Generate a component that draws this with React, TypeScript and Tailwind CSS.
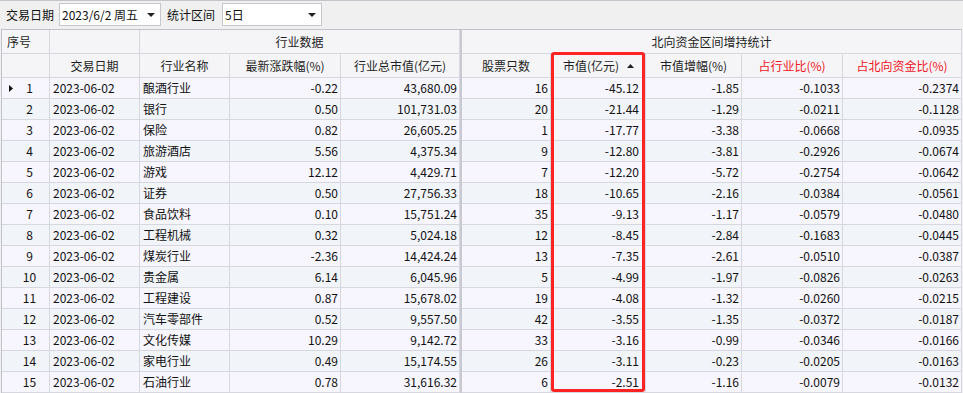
import React from "react";

type Row = [string, string, string, string, string, string, string, string];

const rows: Row[] = [
  ["酿酒行业", "-0.22", "43,680.09", "16", "-45.12", "-1.85", "-0.1033", "-0.2374"],
  ["银行", "0.50", "101,731.03", "20", "-21.44", "-1.29", "-0.0211", "-0.1128"],
  ["保险", "0.82", "26,605.25", "1", "-17.77", "-3.38", "-0.0668", "-0.0935"],
  ["旅游酒店", "5.56", "4,375.34", "9", "-12.80", "-3.81", "-0.2926", "-0.0674"],
  ["游戏", "12.12", "4,429.71", "7", "-12.20", "-5.72", "-0.2754", "-0.0642"],
  ["证券", "0.50", "27,756.33", "18", "-10.65", "-2.16", "-0.0384", "-0.0561"],
  ["食品饮料", "0.10", "15,751.24", "35", "-9.13", "-1.17", "-0.0579", "-0.0480"],
  ["工程机械", "0.32", "5,024.18", "12", "-8.45", "-2.84", "-0.1683", "-0.0445"],
  ["煤炭行业", "-2.36", "14,424.24", "13", "-7.35", "-2.61", "-0.0510", "-0.0387"],
  ["贵金属", "6.14", "6,045.96", "5", "-4.99", "-1.97", "-0.0826", "-0.0263"],
  ["工程建设", "0.87", "15,678.02", "19", "-4.08", "-1.32", "-0.0260", "-0.0215"],
  ["汽车零部件", "0.52", "9,557.50", "42", "-3.55", "-1.35", "-0.0372", "-0.0187"],
  ["文化传媒", "10.29", "9,142.72", "33", "-3.16", "-0.99", "-0.0346", "-0.0166"],
  ["家电行业", "0.49", "15,174.55", "26", "-3.11", "-0.23", "-0.0205", "-0.0163"],
  ["石油行业", "0.78", "31,616.32", "6", "-2.51", "-1.16", "-0.0079", "-0.0132"],
];

const FONT = { fontFamily: '"Noto Sans CJK SC", "Noto Sans", sans-serif' };

const cell = "border-r border-b border-[#d7d7df] flex items-center whitespace-nowrap overflow-hidden";
const hcell = cell + " bg-[#f5f5f7] text-[#1e1e1e] justify-center";
const sep = "bg-[#c9c9d1]";

function Caret() {
  return (
    <svg width="8" height="4" viewBox="0 0 8 4" className="shrink-0">
      <path d="M0 0 L8 0 L4 4 Z" fill="#222" />
    </svg>
  );
}

function Select({ value, w }: { value: string; w: string }) {
  return (
    <div className={`${w} h-[23px] bg-white border border-[#c8c8cc] flex items-center justify-between pl-[2px] pr-[5px]`}>
      <span className="text-[12px] text-[#111]">{value}</span>
      <Caret />
    </div>
  );
}

export default function App() {
  return (
    <div className="relative w-[963px] h-[393px] overflow-hidden bg-[#f0f0f0] text-[12px] leading-none" style={FONT}>
      {/* toolbar */}
      <div className="h-[29px] border-t border-[#c4c4ca] flex items-center pl-[6px] pb-[1px]">
        <span className="text-[#111]">交易日期</span>
        <div className="ml-[5px]">
          <Select value="2023/6/2 周五" w="w-[102px]" />
        </div>
        <span className="ml-[6px] text-[#111]">统计区间</span>
        <div className="ml-[7px]">
          <Select value="5日" w="w-[100px]" />
        </div>
      </div>

      {/* grid */}
      <div className="ml-px w-[961px] border-l border-t border-[#c2c2ca] grid grid-cols-[48px_90px_90px_111px_119px_2px_89px_95px_96px_101px_119px] auto-rows-[21px] grid-rows-[24px_24px]">
        {/* header row 1 */}
        <div className={cell + " bg-[#f5f5f7] text-[#1e1e1e] pl-[5px]"}>序号</div>
        <div className={hcell}></div>
        <div className={hcell + " col-span-3"}>行业数据</div>
        <div className={sep}></div>
        <div className={hcell + " col-span-5"}>北向资金区间增持统计</div>

        {/* header row 2 */}
        <div className={hcell}></div>
        <div className={hcell}>交易日期</div>
        <div className={hcell}>行业名称</div>
        <div className={hcell}>最新涨跌幅(%)</div>
        <div className={hcell}>行业总市值(亿元)</div>
        <div className={sep}></div>
        <div className={hcell}>股票只数</div>
        <div className={hcell + " relative pr-[14px]"}>
          市值(亿元)
          <svg width="7" height="4" viewBox="0 0 7 4" className="absolute right-[11px] top-[10px]">
            <path d="M0 4 L7 4 L3.5 0 Z" fill="#222" />
          </svg>
        </div>
        <div className={hcell}>市值增幅(%)</div>
        <div className={hcell + " text-[#f0141e]"}>占行业比(%)</div>
        <div className={hcell + " text-[#f0141e]"}>占北向资金比(%)</div>

        {/* data rows */}
        {rows.map((r, i) => {
          const bg = i % 2 === 0 ? "bg-[#f7f5fd]" : "bg-[#f1f4f9]";
          const c = `${cell} ${bg} text-[#111]`;
          const num = `${c} justify-end pr-[2px]`;
          return (
            <React.Fragment key={i}>
              <div className={`${c} relative justify-center pl-[8px]`}>
                {i === 0 && (
                  <svg width="4" height="7" viewBox="0 0 4 7" className="absolute left-[7px] top-[7px]">
                    <path d="M0 0 L4 3.5 L0 7 Z" fill="#111" />
                  </svg>
                )}
                {i + 1}
              </div>
              <div className={`${c} pl-[3px]`}>2023-06-02</div>
              <div className={`${c} pl-[3px]`}>{r[0]}</div>
              <div className={num}>{r[1]}</div>
              <div className={num}>{r[2]}</div>
              <div className={sep}></div>
              <div className={num}>{r[3]}</div>
              <div className={`${c} justify-end pr-[6px]`}>{r[4]}</div>
              <div className={num}>{r[5]}</div>
              <div className={num}>{r[6]}</div>
              <div className={num}>{r[7]}</div>
            </React.Fragment>
          );
        })}
      </div>

      {/* highlight box */}
      <div className="absolute left-[551px] top-[52px] w-[94px] h-[340px] border-[3px] border-[#ff2424] rounded-[3px] pointer-events-none"></div>
    </div>
  );
}
